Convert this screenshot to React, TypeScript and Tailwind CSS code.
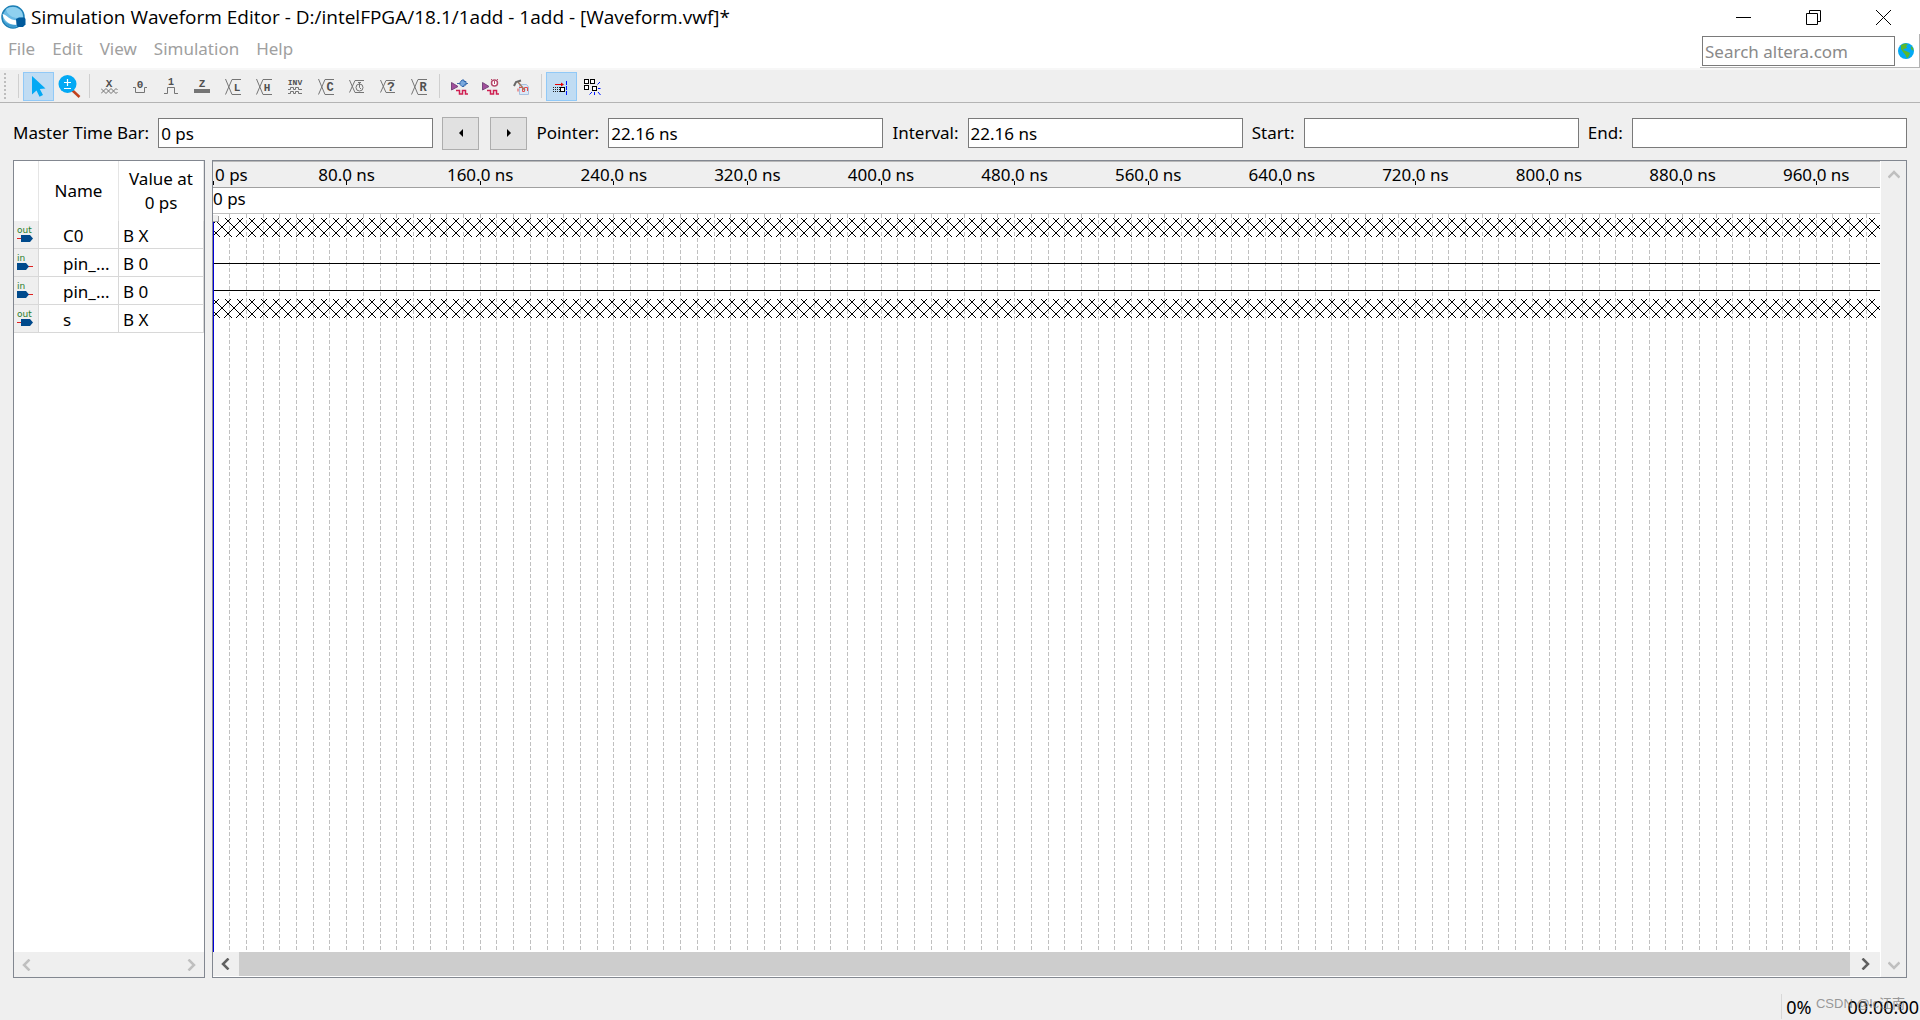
import type { ReactNode } from 'react'

type Tool = {
  name: string
  icon: ReactNode
  active?: boolean
}

type Signal = {
  name: string
  dir: 'in' | 'out'
  value: string
}

const menus = ['File', 'Edit', 'View', 'Simulation', 'Help']

const signals: Signal[] = [
  { name: 'C0', dir: 'out', value: 'B X' },
  { name: 'pin_name1', dir: 'in', value: 'B 0' },
  { name: 'pin_name2', dir: 'in', value: 'B 0' },
  { name: 's', dir: 'out', value: 'B X' },
]

// pixels per 10 ns grid step
const STEP = 16.7
const gridLines = Array.from({ length: 99 }, (_, i) => i + 1)
const labels = Array.from({ length: 12 }, (_, i) => (i + 1) * 80)

function Glyph({ children }: { children: ReactNode }) {
  return (
    <svg width="17" height="17" viewBox="0 0 17 17" fill="none" stroke="#757575" className="shrink-0">
      {children}
    </svg>
  )
}

function Letter({ x = 8, y = 9, size = 11, children }: { x?: number; y?: number; size?: number; children: string }) {
  return (
    <text
      x={x}
      y={y}
      fontSize={size}
      textAnchor="middle"
      fill="#505050"
      stroke="none"
      className="font-['Liberation_Mono',monospace] font-bold"
    >
      {children}
    </text>
  )
}

// bus crossing with an open cell on the right
function BusGlyph({ children }: { children: ReactNode }) {
  return (
    <Glyph>
      <path d="M0.5 1L7 16.5H16M0.5 16.5L7 1.5H16" />
      {children}
    </Glyph>
  )
}

const WaveTail = () => (
  <path d="M5 12.5H8.5V16H11.5V12.5H14.5V16H17" stroke="#cf1f52" strokeWidth="1.5" />
)

const cursorTools: Tool[] = [
  {
    name: 'Selection Tool',
    active: true,
    icon: (
      <svg width="17" height="21" viewBox="0 0 17 21" className="shrink-0">
        <path d="M2 0L15.5 12.5L9.8 13L13 19L9.5 20.8L6.5 14.5L2 18.5Z" fill="#03a9f4" />
      </svg>
    ),
  },
  {
    name: 'Zoom Tool',
    icon: (
      <svg width="23" height="23" viewBox="0 0 23 23" fill="none" className="shrink-0">
        <path d="M14 15L21.5 22" stroke="#c1401b" strokeWidth="2.5" />
        <circle cx="9.5" cy="9" r="9" fill="#03a9f4" />
        <path d="M6 7.5H13M9.5 4V11M6 13.5H13" stroke="#fff" strokeWidth="1.2" />
      </svg>
    ),
  },
]

const valueTools: Tool[] = [
  {
    name: 'Forcing Unknown (X)',
    icon: (
      <Glyph>
        <path d="M0 15.5L5 10.5L10 15.5L15 10.5L16.5 12M0 10.5L5 15.5L10 10.5L15 15.5L16.5 14" />
        <Letter>X</Letter>
      </Glyph>
    ),
  },
  {
    name: 'Forcing Low (0)',
    icon: (
      <Glyph>
        <path d="M1 9.5H3.5V14.5H12.5V9.5H15" />
        <Letter y={10}>0</Letter>
      </Glyph>
    ),
  },
  {
    name: 'Forcing High (1)',
    icon: (
      <Glyph>
        <path d="M1 15.5H4.5V9.5H11.5V15.5H15" />
        <Letter y={7} size={10}>1</Letter>
      </Glyph>
    ),
  },
  {
    name: 'High Impedance (Z)',
    icon: (
      <Glyph>
        <rect y="11" width="16" height="4" fill="#757575" stroke="none" />
        <Letter>Z</Letter>
      </Glyph>
    ),
  },
  { name: 'Weak Low (L)', icon: <BusGlyph><Letter x={12} y={13}>L</Letter></BusGlyph> },
  { name: 'Weak High (H)', icon: <BusGlyph><Letter x={11} y={13}>H</Letter></BusGlyph> },
  {
    name: 'Invert',
    icon: (
      <Glyph>
        <Letter y={7} size={8}>INV</Letter>
        <path d="M1 11.5H3.5V9.5H6.5V11.5H8.5V9.5H11.5V11.5H15M1 15.5H3.5V13.5H6.5V15.5H8.5V13.5H11.5V15.5H15" />
      </Glyph>
    ),
  },
  { name: 'Count Value', icon: <BusGlyph><Letter x={12} y={13} size={12}>C</Letter></BusGlyph> },
  {
    name: 'Overwrite Clock',
    icon: (
      <Glyph>
        <path d="M0.5 2L6 14.5H15M0.5 14.5L6 2.5H15" />
        <circle cx="10.5" cy="9.5" r="3.5" />
        <path d="M9 4.5H12M10.5 5V9.5L12 11" />
      </Glyph>
    ),
  },
  {
    name: 'Arbitrary Value',
    icon: (
      <Glyph>
        <path d="M0.5 2L6 14.5H15M0.5 14.5L6 2.5H15" />
        <Letter x={11} y={13} size={13}>?</Letter>
      </Glyph>
    ),
  },
  { name: 'Random Values', icon: <BusGlyph><Letter x={12} y={13} size={12}>R</Letter></BusGlyph> },
]

const simTools: Tool[] = [
  {
    name: 'Run Functional Simulation',
    icon: (
      <Glyph>
        <path d="M0.5 4.5L7 8.5L0.5 12Z" fill="#a14e9b" stroke="#77467c" />
        <path d="M6 5.5H9M15 5.5H17" stroke="#3e6da8" />
        <path d="M9 4.5L11 2H13V3.5H15V7H13V8.5H11L9 6.5Z" fill="#79a9de" stroke="#3468ad" />
        <WaveTail />
      </Glyph>
    ),
  },
  {
    name: 'Run Timing Simulation',
    icon: (
      <Glyph>
        <path d="M0.5 4.5L7 8.5L0.5 12Z" fill="#a14e9b" stroke="#77467c" />
        <circle cx="12.5" cy="5" r="3" fill="#fff" stroke="#b7496b" strokeWidth="1.5" />
        <path d="M12.5 3V6M9 1L10.5 2.5M16 1L14.5 2.5" stroke="#b7496b" />
        <WaveTail />
      </Glyph>
    ),
  },
  {
    name: 'Generate Testbench',
    icon: (
      <Glyph>
        <path d="M6.5 6.5H13.5L15.5 9V16.5H6.5Z" fill="#dce8f6" stroke="#a9c1df" />
        <path d="M5 10.5V13.5M6 9.5H9.5V13.5H11.5V9.5H14.5V13" stroke="#e84848" />
        <path d="M5 4L12 12.5" stroke="#a17960" strokeWidth="1.5" />
        <path d="M1 8L3 4L8 2.5" stroke="#686868" strokeWidth="2" />
      </Glyph>
    ),
  },
]

const snapTools: Tool[] = [
  {
    name: 'Snap to Grid',
    active: true,
    icon: (
      <Glyph>
        <path d="M2 6.5H9" stroke="#e60000" />
        <path d="M8 4.5L11 6.5L8 8.500Z" fill="#e60000" stroke="none" />
        <path d="M0 9.5H7M0 11.5H7M0 13.5H7" stroke="#222" strokeDasharray="1 1" />
        <rect x="7.5" y="9.5" width="4" height="4" stroke="#000" fill="#fff" />
        <path d="M13.5 3V17" stroke="#0018ff" strokeDasharray="4 1" />
      </Glyph>
    ),
  },
  {
    name: 'Snap to Transition',
    icon: (
      <Glyph>
        <g stroke="#000" fill="#fff">
          <rect x="0.5" y="1.5" width="4" height="4" />
          <rect x="6.5" y="1.5" width="4" height="4" />
          <rect x="0.5" y="7.5" width="4" height="4" />
          <rect x="8.5" y="8.5" width="4" height="4" />
        </g>
        <path d="M13.5 6.5L16 4M14 10.5H16.5M14 14L16.5 17M10.5 14V17M8 14L5.5 16.5" stroke="#0018ff" />
      </Glyph>
    ),
  },
]

function ToolButtons({ tools }: { tools: Tool[] }) {
  return tools.map(tool => (
    <button
      key={tool.name}
      type="button"
      title={tool.name}
      aria-label={tool.name}
      className={
        tool.active
          ? 'flex h-[29px] w-[31px] items-center justify-center border border-[#91c9f7] bg-[#c0dcf3]'
          : 'flex h-[29px] w-[31px] items-center justify-center'
      }
    >
      {tool.icon}
    </button>
  ))
}

const Separator = () => <div className="mx-1 h-6 w-px bg-[#cfcfcf]" />

function TitleBar() {
  return (
    <header className="flex h-[34px] items-center bg-white pr-[2px]">
      <svg width="25" height="24" viewBox="0 0 25 24" className="ml-px shrink-0">
        <circle cx="12" cy="12" r="11" fill="#69b9e4" stroke="#1d7fb5" strokeWidth="1.5" />
        <path d="M5 4C9 1 17 1 21 7L22 12L15 13C10 12 6 9 5 4Z" fill="#8fd0ef" />
        <path d="M1.5 9C6 10 8 15 16 15.5L17 20C9 20 3 17 1.5 9Z" fill="#fff" />
        <path d="M2 14C5 20 12 20 16 20L14 22.5C8 23 3 19 2 14Z" fill="#3c9bd0" />
        <path d="M15 14L18 12.5H23.5L24.5 14V19.5L22 22H17L15.5 20Z" fill="#005a9c" />
      </svg>
      <h1 className="ml-[5px] flex-1 font-['Open_Sans',sans-serif] text-[19px] text-black">
        Simulation Waveform Editor - D:/intelFPGA/18.1/1add - 1add - [Waveform.vwf]*
      </h1>
      <div className="flex h-full">
        <button type="button" aria-label="Minimize" className="flex w-[70px] items-center justify-center">
          <svg width="15" height="15" fill="none" stroke="#000">
            <path d="M0 7.5H15" />
          </svg>
        </button>
        <button type="button" aria-label="Restore" className="flex w-[70px] items-center justify-center">
          <svg width="15" height="15" fill="none" stroke="#000">
            <path d="M0.5 3.5H11.5V14.5H0.5ZM3.5 3.5V0.5H14.5V11.5H11.5" />
          </svg>
        </button>
        <button type="button" aria-label="Close" className="flex w-[70px] items-center justify-center">
          <svg width="15" height="15" fill="none" stroke="#000">
            <path d="M0 0L15 15M15 0L0 15" />
          </svg>
        </button>
      </div>
    </header>
  )
}

function MenuBar() {
  return (
    <div className="flex h-[34px] bg-white">
      <nav className="flex flex-1 gap-[17px] pl-2 text-[#a0a0a0]">
        {menus.map(menu => (
          <button key={menu} type="button" className="h-[30px]">
            {menu}
          </button>
        ))}
      </nav>
      <form className="flex items-center gap-[3px] border-r border-b border-[#b4b4b4] pt-px pr-[5px] pl-[2px]">
        <input
          type="search"
          aria-label="Search altera.com"
          placeholder="Search altera.com"
          className="h-[30px] w-[193px] border border-[#7a7a7a] bg-white px-[2px] placeholder:text-[#8a8a8a]"
        />
        <button type="submit" aria-label="Search">
          <svg width="16" height="16" viewBox="0 0 16 16">
            <circle cx="8" cy="8" r="8" fill="#03a9f4" />
            <path d="M3 2L7 0.5L10 1L8 3L9 5L6 6L5 7L8 8L12 10L11 13L9 15.5L7.5 12L5 9L3 6Z" fill="#5cb82c" />
            <path d="M13 3L15 5L15.5 8L13 6Z" fill="#5cb82c" />
          </svg>
        </button>
      </form>
    </div>
  )
}

function ToolBar() {
  return (
    <div role="toolbar" className="flex h-[35px] items-center border-t-2 border-b border-t-[#f7f7f7] border-b-[#b4b4b4]">
      <div className="ml-1 h-[26px] border-l-2 border-dotted border-[#bdbdbd]" />
      <div className="mr-1 ml-3 h-6 w-px bg-[#cfcfcf]" />
      <ToolButtons tools={cursorTools} />
      <Separator />
      <ToolButtons tools={valueTools} />
      <Separator />
      <ToolButtons tools={simTools} />
      <Separator />
      <ToolButtons tools={snapTools} />
    </div>
  )
}

function TimeField({ id, label, value }: { id: string; label: string; value: string }) {
  return (
    <>
      <label htmlFor={id} className="whitespace-nowrap">
        {label}
      </label>
      <input
        id={id}
        type="text"
        defaultValue={value}
        className="h-[30px] min-w-0 flex-1 border border-[#7a7a7a] bg-white px-[2px]"
      />
    </>
  )
}

function TimeBar() {
  return (
    <div className="flex h-[57px] items-center gap-[9px] px-[13px] pt-[3px]">
      <TimeField id="master" label="Master Time Bar:" value="0 ps" />
      <button
        type="button"
        aria-label="Previous transition"
        className="flex h-[33px] w-[37px] items-center justify-center border border-[#adadad] bg-[#e1e1e1]"
      >
        <svg width="4" height="8">
          <path d="M4 0V8L0 4Z" />
        </svg>
      </button>
      <button
        type="button"
        aria-label="Next transition"
        className="ml-[2px] flex h-[33px] w-[37px] items-center justify-center border border-[#adadad] bg-[#e1e1e1]"
      >
        <svg width="4" height="8">
          <path d="M0 0V8L4 4Z" />
        </svg>
      </button>
      <TimeField id="pointer" label="Pointer:" value="22.16 ns" />
      <TimeField id="interval" label="Interval:" value="22.16 ns" />
      <TimeField id="start" label="Start:" value="" />
      <TimeField id="end" label="End:" value="" />
    </div>
  )
}

function PinIcon({ dir }: { dir: 'in' | 'out' }) {
  return (
    <svg width="17" height="18" viewBox="0 0 17 18" className="ml-[3px]">
      <text x="0" y="7" fontSize="9" fill="#2b7d2b" className="font-['DejaVu_Sans',sans-serif]">
        {dir}
      </text>
      {dir === 'out' ? (
        <>
          <path d="M0 12.5H5" stroke="#e02020" />
          <path d="M4 9H13L16 12.5L13 16H4Z" fill="#004a8c" />
        </>
      ) : (
        <>
          <path d="M11 12.5H16" stroke="#e02020" />
          <path d="M0 9H9L12 12.5L9 16H0Z" fill="#004a8c" />
        </>
      )}
    </svg>
  )
}

function Chevron({ d, color }: { d: string; color: string }) {
  return (
    <svg width="12" height="12" viewBox="0 0 12 12" fill="none" stroke={color} strokeWidth="2.5">
      <path d={d} />
    </svg>
  )
}

const LEFT = 'M8.5 0.5L3 6L8.5 11.5'
const RIGHT = 'M3.5 0.5L9 6L3.5 11.5'
const UP = 'M0.5 8.5L6 3L11.5 8.5'
const DOWN = 'M0.5 3.5L6 9L11.5 3.5'

function SignalPanel() {
  return (
    <section className="flex w-[192px] shrink-0 flex-col border border-[#828790] bg-white">
      <table className="w-full table-fixed border-separate border-spacing-0">
        <colgroup>
          <col className="w-[25px]" />
          <col className="w-[80px]" />
          <col />
        </colgroup>
        <thead>
          <tr className="h-[60px]">
            <th aria-label="Type" className="border-r border-[#e5e5e5]" />
            <th className="border-r border-[#e5e5e5] py-px font-normal">Name</th>
            <th className="border-r border-[#e5e5e5] py-px font-normal leading-6">
              Value at
              <br />0 ps
            </th>
          </tr>
        </thead>
        <tbody>
          {signals.map(signal => (
            <tr key={signal.name} className="h-[28px]">
              <td className="border-r border-b border-[#d8d8d8] bg-[#efefef] p-0">
                <PinIcon dir={signal.dir} />
              </td>
              <td className="border-r border-b border-[#d8d8d8] pt-[3px] pr-2 pb-0 pl-6">
                {signal.name.length > 4 ? signal.name.slice(0, 4) + '...' : signal.name}
              </td>
              <td className="border-r border-b border-[#d8d8d8] pt-[3px] pb-0 pl-1">{signal.value}</td>
            </tr>
          ))}
        </tbody>
      </table>
      <div className="mt-auto flex h-[25px] items-center justify-between bg-[#efefef] px-[7px]">
        <button type="button" aria-label="Scroll signals left" disabled>
          <Chevron d={LEFT} color="#bfbfbf" />
        </button>
        <button type="button" aria-label="Scroll signals right" disabled>
          <Chevron d={RIGHT} color="#bfbfbf" />
        </button>
      </div>
    </section>
  )
}

function Waveform() {
  return (
    <svg className="h-full w-full flex-1" shapeRendering="crispEdges">
      <defs>
        <pattern id="unknown" x="3" y="60" width="12" height="12" patternUnits="userSpaceOnUse">
          <path d="M0 0L12 12M12 0L0 12" stroke="#000" strokeWidth="1" />
        </pattern>
        <pattern id="unknown-low" x="3" y="141" width="12" height="12" patternUnits="userSpaceOnUse">
          <path d="M0 0L12 12M12 0L0 12" stroke="#000" strokeWidth="1" />
        </pattern>
      </defs>

      {/* ruler */}
      <rect width="100%" height="26" fill="#efefef" />
      <path d="M0 0.5H4000" stroke="#b8b8b8" />
      <path d="M0 26.5H4000" stroke="#a0a0a0" />
      <path d="M0 52.5H4000" stroke="#c0c0c0" />
      <text x="2" y="20">0 ps</text>
      <path d="M0.5 20V24" stroke="#000" />
      {labels.map(ns => (
        <g key={ns}>
          <text x={(ns / 10) * STEP} y="20" textAnchor="middle">
            {ns + '.0 ns'}
          </text>
          <path d={`M${Math.floor((ns / 10) * STEP) + 0.5} 20V24`} stroke="#000" />
        </g>
      ))}
      <text x="0" y="44">0 ps</text>

      {/* grid */}
      {gridLines.map(i => {
        const x = Math.floor(i * STEP) + 0.5
        return <line key={i} x1={x} x2={x} y1="53" y2="100%" stroke="#c0c0c0" strokeDasharray="4 2" />
      })}

      {/* signals */}
      <rect x="1" y="57" width="100%" height="19" fill="url(#unknown)" />
      <path d="M0 102.5H4000M0 129.5H4000" stroke="#000" />
      <rect x="1" y="138" width="100%" height="19" fill="url(#unknown-low)" />

      {/* master time bar */}
      <rect x="0" y="54" width="5" height="7" fill="#efefef" />
      <path d="M5.5 55V60.5H0" stroke="#a0a0a0" fill="none" />
      <line x1="0.5" x2="0.5" y1="61" y2="100%" stroke="#0000d8" />
    </svg>
  )
}

function WavePanel() {
  return (
    <section className="flex min-w-0 flex-1 border border-[#828790] bg-white">
      <div className="flex min-w-0 flex-1 flex-col">
        <Waveform />
        <div className="mb-px flex h-[24px] items-stretch bg-[#efefef]">
          <button type="button" aria-label="Scroll left" className="flex w-[26px] items-center justify-center">
            <Chevron d={LEFT} color="#606060" />
          </button>
          <div className="flex-1 bg-[#cdcdcd]" />
          <button type="button" aria-label="Scroll right" className="flex w-[30px] items-center justify-center">
            <Chevron d={RIGHT} color="#606060" />
          </button>
        </div>
      </div>
      <div className="ml-px flex w-[25px] flex-col items-center justify-between bg-[#efefef] pt-2 pb-[6px]">
        <button type="button" aria-label="Scroll up" disabled>
          <Chevron d={UP} color="#bfbfbf" />
        </button>
        <button type="button" aria-label="Scroll down" disabled>
          <Chevron d={DOWN} color="#bfbfbf" />
        </button>
      </div>
    </section>
  )
}

export default function App() {
  return (
    <div className="flex h-screen flex-col overflow-hidden bg-[#efefef] font-['Noto_Sans',sans-serif] text-[17px] leading-6 text-black">
      <TitleBar />
      <MenuBar />
      <ToolBar />
      <TimeBar />
      <main className="flex min-h-0 flex-1 gap-[7px] px-[13px]">
        <SignalPanel />
        <WavePanel />
      </main>
      <footer className="relative flex h-[42px] items-end justify-end pb-px">
        <div className="flex h-[25px] items-center gap-9 border-l border-[#d8d8d8] pr-px pl-1 text-lg">
          <span>0%</span>
          <span>00:00:00</span>
        </div>
        <span className="absolute right-[15px] bottom-[4px] font-['Liberation_Sans','Noto_Sans_CJK_SC',sans-serif] text-[13px] text-[#808080]/80">
          CSDN @lc江南
        </span>
      </footer>
    </div>
  )
}
